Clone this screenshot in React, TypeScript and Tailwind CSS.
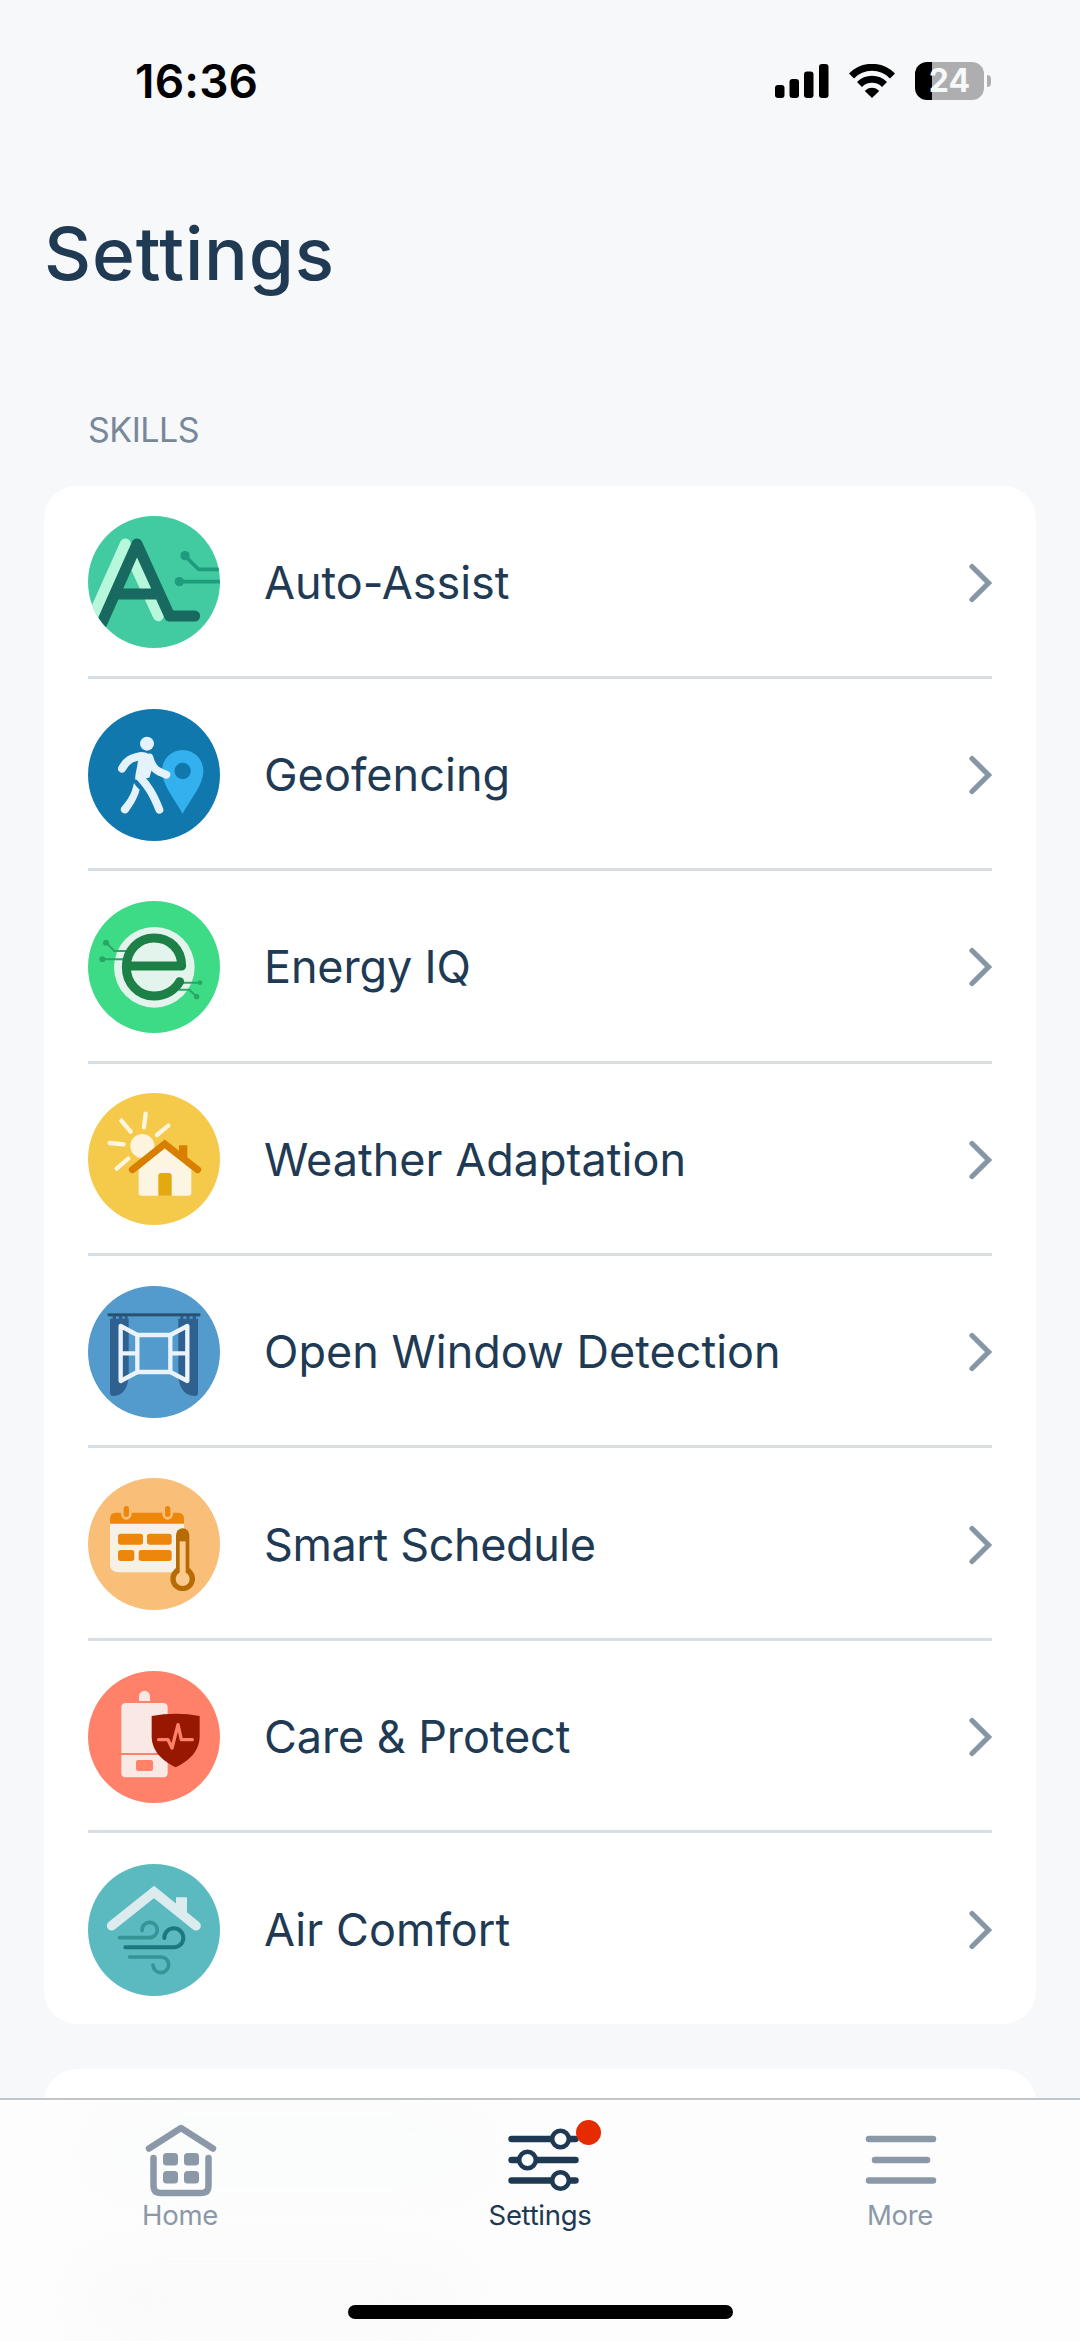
import type { ReactNode } from 'react';

interface Skill {
  label: string;
  spacing: string;
  icon: ReactNode;
}

function AutoAssistIcon() {
  return (
    <>
      <rect width="396" height="396" fill="#42cba1" />
      <g fill="none" strokeLinecap="round" strokeLinejoin="round">
        <path d="M2 330 L112 84 L211 299" stroke="#b7f8dd" strokeWidth="33" />
        <g stroke="#1e9c7d" strokeWidth="11">
          <path d="M291 119 L331 160 H400" />
          <path d="M274 197 H400" />
        </g>
        <path d="M36 334 L147 84 L245 300 H320 M88 234 H212" stroke="#18695f" strokeWidth="33" />
      </g>
      <circle cx="291" cy="119" r="14" fill="#1e9c7d" />
      <circle cx="274" cy="197" r="14" fill="#1e9c7d" />
    </>
  );
}

function GeofencingIcon() {
  return (
    <>
      <rect width="396" height="396" fill="#1078ad" />
      <path d="M284 123 a62 62 0 0 1 62 62 c0 42 -40 88 -62 129 c-22 -41 -62 -87 -62 -129 a62 62 0 0 1 62 -62z" fill="#33b1ee" />
      <circle cx="284" cy="186" r="24.500" fill="#1078ad" />
      <g fill="#e4f2fb">
        <circle cx="177" cy="104" r="21" />
        <path d="M142 134 C160 126 184 128 194 148 L198 160 L184 206 L142 212 C140 200 147 180 150 156z" />
        <path d="M138 222 C144 232 150 238 155 242 C150 262 140 282 121 308 C112 320 92 310 100 295 C118 274 130 258 138 222z" />
      </g>
      <g fill="none" stroke="#e4f2fb" strokeWidth="24" strokeLinecap="round" strokeLinejoin="round">
        <path d="M102 179 C114 156 128 146 158 142" />
        <path d="M184 146 C194 182 210 188 235 197" />
        <path d="M156 205 C174 226 192 244 214 302" />
      </g>
    </>
  );
}

function EnergyIcon() {
  return (
    <>
      <rect width="396" height="396" fill="#3edb86" />
      <circle cx="199" cy="199" r="121" fill="#e3f4ec" />
      <g fill="none" stroke="#2ba566" strokeWidth="6">
        <path d="M54 125 L79 150 H118" />
        <path d="M43 175 H105" />
        <path d="M280 245 H336" />
        <path d="M272 266 H304 L326 287" />
      </g>
      <g fill="#2ba566">
        <circle cx="54" cy="125" r="9" />
        <circle cx="43" cy="175" r="9" />
        <circle cx="336" cy="245" r="7" />
        <circle cx="326" cy="287" r="8" />
      </g>
      <path
        d="M116 195 H281 C281 145 245 111 198 111 C151 111 115 149 115 198 C115 247 151 285 198 285 C233 285 262 266 275 242"
        fill="none"
        stroke="#1c8047"
        strokeWidth="27"
        strokeLinecap="round"
        strokeLinejoin="round"
      />
    </>
  );
}

function WeatherIcon() {
  return (
    <>
      <rect width="396" height="396" fill="#f5c94a" />
      <circle cx="163" cy="159" r="36" fill="#fcf4df" />
      <path
        d="M173 62 L168 103 M100 83 L128 116 M241 98 L207 126 M65 150 L107 154 M121 197 L86 227"
        stroke="#fdf5dd"
        strokeWidth="13"
        strokeLinecap="round"
      />
      <path d="M230 152 L152 222 V300 Q152 308 160 308 H302 Q310 308 310 300 V222z" fill="#f5c94a" />
      <path d="M230 162 L152 230 V300 Q152 308 160 308 H302 Q310 308 310 300 V230z" fill="#fcf5e2" />
      <path d="M211 308 V248 Q211 240 219 240 H243 Q251 240 251 248 V308z" fill="#e2aa10" />
      <path d="M273 157 H298 V208 L273 190z" fill="#d97f00" />
      <path d="M133 230 L230 153 L329 230" fill="none" stroke="#d97f00" strokeWidth="21" strokeLinecap="round" />
    </>
  );
}

function WindowIcon() {
  return (
    <>
      <rect width="396" height="396" fill="#539acd" />
      <g fill="#2f6190">
        <path d="M66 98 H122 V270 C120 305 105 330 76 330 Q66 330 66 320z" />
        <path d="M330 98 H271 V270 C273 305 290 330 320 330 Q330 330 330 320z" />
        <path d="M74 90 h10 v9 h-10z M93 90 h10 v9 h-10z M110 90 h9 v9 h-9z M277 90 h9 v9 h-9z M295 90 h10 v9 h-10z M314 90 h10 v9 h-10z" />
      </g>
      <rect x="59" y="82" width="278" height="9" fill="#2a526f" />
      <g fill="none" stroke="#eaf3fb" strokeWidth="13" strokeLinejoin="round">
        <rect x="148" y="147" width="99" height="111" />
        <path d="M148 147 L98 120 V285 L148 258 M98 202 H148" />
        <path d="M247 147 L298 120 V285 L247 258 M298 202 H247" />
      </g>
    </>
  );
}

function ScheduleIcon() {
  return (
    <>
      <rect width="396" height="396" fill="#f9be78" />
      <path d="M66 130 H288 V283 H92 Q66 283 66 259z" fill="#f6f1e6" />
      <path d="M66 137 V122 Q66 104 84 104 H270 Q288 104 288 122 V137z" fill="#ec870c" />
      <g strokeLinecap="round">
        <path d="M115 88 V109 M239 88 V109" stroke="#f9be78" strokeWidth="32" />
        <path d="M115 92 V109 M239 92 V109" stroke="#ec870c" strokeWidth="16" />
      </g>
      <g fill="#ec870c">
        <rect x="90" y="167" width="75" height="33" rx="8" />
        <rect x="177" y="167" width="74" height="33" rx="8" />
        <rect x="90" y="216" width="49" height="33" rx="8" />
        <rect x="152" y="216" width="99" height="33" rx="8" />
      </g>
      <rect x="264" y="151" width="40" height="150" rx="20" fill="#b66b04" />
      <circle cx="284" cy="302" r="37" fill="#b66b04" />
      <rect x="275" y="190" width="18" height="110" fill="#fcca8c" />
      <circle cx="284" cy="303" r="21" fill="#fcca8c" />
    </>
  );
}

function CareIcon() {
  return (
    <>
      <rect width="396" height="396" fill="#ff8169" />
      <g fill="#fae8e4">
        <path d="M153 90 V76 A16 16 0 0 1 186 76 V90z" />
        <path d="M100 246 V110 Q100 96 114 96 H225 Q239 96 239 110 V246z" />
        <path d="M100 252 H239 V305 Q239 319 225 319 H114 Q100 319 100 305z" />
      </g>
      <rect x="144" y="267" width="51" height="33" rx="7" fill="#ff8169" />
      <path d="M191 135 Q263 121 335 135 V195 C335 240 303 270 263 289 C223 270 191 240 191 195z" fill="#971700" />
      <path
        d="M212 206 H240 L252 231 L270 161 L280 206 H313"
        fill="none"
        stroke="#ff8169"
        strokeWidth="10"
        strokeLinecap="round"
        strokeLinejoin="round"
      />
    </>
  );
}

function AirIcon() {
  return (
    <>
      <rect width="396" height="396" fill="#5abac0" />
      <g fill="none" strokeLinecap="round">
        <path d="M71 185 L198 84 L324 185" stroke="#dcebed" strokeWidth="29" />
        <path d="M95 221 H185 A23 23 0 1 0 162 200" stroke="#349496" strokeWidth="11" />
        <path d="M112 250 H258 A28.500 28.500 0 1 0 229 222" stroke="#1c787d" strokeWidth="12" />
        <path d="M125 279 H217 A23.500 23.500 0 1 1 195 303" stroke="#349496" strokeWidth="11" />
      </g>
      <path d="M264 100 H297 V155 L264 130z" fill="#dcebed" />
    </>
  );
}

const skills: Skill[] = [
  { label: 'Auto-Assist', spacing: 'tracking-[-0.05px]', icon: <AutoAssistIcon /> },
  { label: 'Geofencing', spacing: 'tracking-[0.05px]', icon: <GeofencingIcon /> },
  { label: 'Energy IQ', spacing: 'tracking-[-0.15px]', icon: <EnergyIcon /> },
  { label: 'Weather Adaptation', spacing: 'tracking-normal', icon: <WeatherIcon /> },
  { label: 'Open Window Detection', spacing: 'tracking-normal', icon: <WindowIcon /> },
  { label: 'Smart Schedule', spacing: 'tracking-[-0.4px]', icon: <ScheduleIcon /> },
  { label: 'Care & Protect', spacing: 'tracking-[-0.1px]', icon: <CareIcon /> },
  { label: 'Air Comfort', spacing: 'tracking-[0.05px]', icon: <AirIcon /> },
];

function StatusBar() {
  return (
    <div className="flex h-[160px] shrink-0 items-center justify-between pt-px pr-[89px] pl-[135px] text-black">
      <span className="text-[46px] leading-none font-semibold tracking-[0.2px]">16:36</span>
      <div className="flex items-center">
        <svg className="h-[34px] w-[54px]" viewBox="0 0 54 34">
          <rect x="0" y="21" width="9.500" height="13" rx="3" />
          <rect x="14.500" y="15" width="9.500" height="19" rx="3" />
          <rect x="29" y="7.500" width="9.500" height="26.500" rx="3" />
          <rect x="44" y="0" width="9.500" height="34" rx="3" />
        </svg>
        <svg className="ml-5 h-[34px] w-[46px]" viewBox="0 0 46 34">
          <path d="M2.500 12 A28.500 28.500 0 0 1 43.500 12" fill="none" stroke="#000" strokeWidth="7" />
          <path d="M10.500 20.500 A17.500 17.500 0 0 1 35.500 20.500" fill="none" stroke="#000" strokeWidth="7" />
          <path d="M23 34 L15.800 27 C19.500 22.500 26.500 22.500 30.200 27z" />
        </svg>
        <div className="ml-5 flex h-[38px] w-[69px] items-center justify-center rounded-[12px] bg-linear-to-r from-black from-24% to-[#aeaeb0] to-24% text-[32px] leading-none font-bold text-[#f7f8fa]">
          24
        </div>
        <div className="ml-[3px] h-3 w-1 rounded-r-full bg-[#aeaeb0]" />
      </div>
    </div>
  );
}

function SkillRow({ skill, last }: { skill: Skill; last: boolean }) {
  return (
    <div
      className={`flex shrink-0 items-center pt-0.5 ${last ? 'h-[191px]' : 'h-[192.4px] border-b-3 border-[#d8dfe4]'}`}
    >
      <svg className="size-[132px] shrink-0 rounded-full" viewBox="0 0 396 396">
        {skill.icon}
      </svg>
      <span className={`ml-11 flex-1 text-[45px] leading-none whitespace-nowrap ${skill.spacing}`}>{skill.label}</span>
      <svg className="mt-px h-[40px] w-[24px]" viewBox="0 0 24 40" fill="none">
        <path d="M4 3.500 L20.500 20 L4 36.500" stroke="#8796a5" strokeWidth="5.200" strokeLinecap="round" />
      </svg>
    </div>
  );
}

function TabBar() {
  return (
    <nav className="relative flex h-[243px] shrink-0 flex-col items-center overflow-hidden border-t-2 border-[#c3c6c9] bg-[#fdfdfd]">
      <div className="absolute top-5 left-24 h-16 w-96 rounded-full bg-[#fafbfb] blur-xl" />
      <div className="absolute top-40 left-20 h-20 w-96 rounded-full bg-[#fafafb] blur-xl" />
      <div className="relative grid w-full grid-cols-3 text-[27.5px] leading-none tracking-[-0.3px] text-[#8b98a8]">
        <div className="flex flex-col items-center gap-0.5 pt-[22px]">
          <svg className="size-[78px]" viewBox="-1 0 78 78" fill="none">
            <g stroke="#8b98a8" strokeWidth="6.500" strokeLinecap="round" strokeLinejoin="round">
              <path d="M7 26.500 L39 6 L71 26.500" />
              <path d="M11.500 36 V64 Q11.500 71 18.500 71 H59.500 Q66.500 71 66.500 64 V36" />
            </g>
            <g fill="#8b98a8">
              <rect x="21" y="31" width="15" height="12.500" rx="3.500" />
              <rect x="42" y="31" width="15" height="12.500" rx="3.500" />
              <rect x="21" y="49" width="15" height="12.500" rx="3.500" />
              <rect x="42" y="49" width="15" height="12.500" rx="3.500" />
            </g>
          </svg>
          <span>Home</span>
        </div>
        <div className="flex flex-col items-center gap-0.5 pt-[22px] text-[#203953]">
          <div className="relative">
            <svg className="size-[78px]" viewBox="0 0 78 78">
              <path d="M10.500 17 H74.500 M10.500 38 H74.500 M10.500 58.500 H74.500" stroke="#203953" strokeWidth="6.500" strokeLinecap="round" />
              <g fill="#fdfdfd" stroke="#203953" strokeWidth="4.500">
                <circle cx="59.500" cy="17" r="8.300" />
                <circle cx="26.500" cy="38" r="8.300" />
                <circle cx="59.500" cy="58.500" r="8.300" />
              </g>
            </svg>
            <span className="absolute -top-[2px] left-[75px] size-[25px] rounded-full bg-[#e62b00]" />
          </div>
          <span>Settings</span>
        </div>
        <div className="flex flex-col items-center gap-0.5 pt-[22px]">
          <svg className="size-[78px]" viewBox="1 0 78 78">
            <path d="M9 17 H73 M15 38 H67 M9 58.500 H73" stroke="#8b98a8" strokeWidth="6.500" strokeLinecap="round" />
          </svg>
          <span>More</span>
        </div>
      </div>
      <div className="relative mt-auto mb-[22px] h-[14px] w-[385px] rounded-full bg-black" />
    </nav>
  );
}

export default function App() {
  return (
    <div className="flex h-[2341px] w-[1080px] flex-col overflow-hidden bg-[#f6f8fa] font-['Inter',sans-serif] text-[#213a54]">
      <StatusBar />
      <main className="flex min-h-0 flex-1 flex-col overflow-hidden px-11">
        <h1 className="mt-[56px] text-[73px] leading-[75px] font-medium tracking-[0.8px]">Settings</h1>
        <h2 className="mt-[121px] ml-11 text-[34px] leading-[36px] tracking-[-0.5px] text-[#78879a]">SKILLS</h2>
        <section className="mt-[38px] flex shrink-0 flex-col rounded-[33px] bg-white px-11 pt-[0.5px]">
          {skills.map((skill, i) => (
            <SkillRow key={skill.label} skill={skill} last={i === skills.length - 1} />
          ))}
        </section>
        <section className="mt-[44.5px] h-[200px] shrink-0 rounded-[33px] bg-white" />
      </main>
      <TabBar />
    </div>
  );
}
